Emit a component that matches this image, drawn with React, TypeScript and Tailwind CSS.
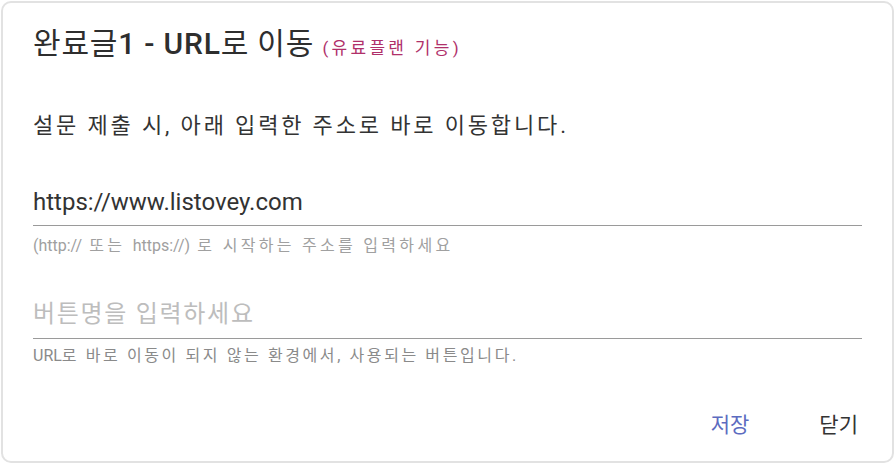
export default function App() {
    return (
        <div className="w-[895px] h-[464px] bg-white p-px font-['Roboto','Noto_Sans_CJK_KR',sans-serif]">
            <div className="h-full rounded-[10px] border-2 border-[#e2e2e2] bg-white pl-[30px] pr-[30px] flex flex-col">
                <h1 className="mt-[21px] text-[30px] leading-[40px] tracking-[0.8px] text-[#2e2e2e] font-normal whitespace-nowrap">
                    완료글<span className="font-medium">1 - URL</span>로 이동{" "}
                    <span className="text-[17px] tracking-[3.3px] text-[#b0306a]">(유료플랜 기능)</span>
                </h1>

                <p className="mt-[43px] text-[22px] leading-[30px] tracking-[2.85px] text-[#333333]">
                    설문 제출 시, 아래 입력한 주소로 바로 이동합니다.
                </p>

                <div className="mt-[45px] border-b border-[#9a9a9a] pb-[7px]">
                    <input
                        type="text"
                        defaultValue="https://www.listovey.com"
                        className="w-full bg-transparent outline-none text-[24px] leading-[32px] h-[32px] text-[#333333]"
                    />
                </div>
                <p className="mt-[9px] text-[16px] leading-[22px] tracking-[3.3px] text-[#a0a0a0] whitespace-nowrap">
                    <span className="tracking-normal">(http://</span> 또는{" "}
                    <span className="tracking-normal">https://)</span> 로 시작하는 주소를 입력하세요
                </p>

                <div className="mt-[41px] border-b border-[#9a9a9a] pb-[8px]">
                    <input
                        type="text"
                        placeholder="버튼명을 입력하세요"
                        className="w-full bg-transparent outline-none text-[24px] leading-[32px] h-[32px] text-[#333333] placeholder:text-[#bdbdbd] placeholder:tracking-[1.7px]"
                    />
                </div>
                <p className="mt-[6px] text-[16px] leading-[22px] tracking-[2.6px] text-[#8a8a8a] whitespace-nowrap">
                    <span className="tracking-normal">URL</span>로 바로 이동이 되지 않는 환경에서, 사용되는 버튼입니다.
                </p>

                <div className="mt-[44px] flex justify-end gap-[70px] pr-[4px]">
                    <button type="button" className="text-[21px] leading-[28px] text-[#5c6bc0]">
                        저장
                    </button>
                    <button type="button" className="text-[21px] leading-[28px] text-[#333333]">
                        닫기
                    </button>
                </div>
            </div>
        </div>
    );
}
